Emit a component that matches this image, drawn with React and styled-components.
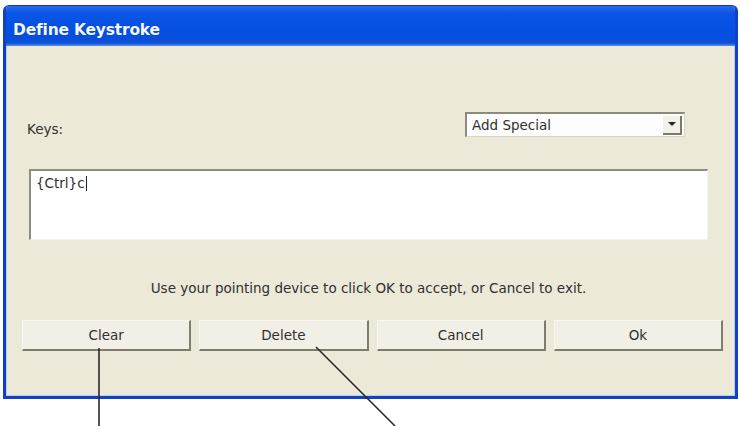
import React from 'react'
import styled, { createGlobalStyle } from 'styled-components'

const GlobalStyle = createGlobalStyle`
  html, body {
    margin: 0;
    background: #ffffff;
  }
  body {
    font-family: "DejaVu Sans", Verdana, sans-serif;
  }
`

const StyledPage = styled.div`
  position: relative;
  width: 740px;
  height: 426px;
  box-sizing: border-box;
  padding: 5px 2px 0 3px;
  overflow: hidden;
`

const StyledDialog = styled.div`
  width: 735px;
  height: 394px;
  box-sizing: border-box;
  display: flex;
  flex-direction: column;
  border: 3px solid #1141c4;
  border-top: none;
  border-radius: 6px 6px 0 0;
  background: #ece9d8;
  overflow: hidden;
`

const StyledTitleBar = styled.div`
  height: 41px;
  flex: none;
  display: flex;
  align-items: center;
  padding: 7px 0 0 7px;
  box-sizing: border-box;
  background: linear-gradient(180deg, #2c6bea 0%, #0b55e6 18%, #0450e4 60%, #0a4fd6 92%, #5d8ee6 100%);
  border-top: 1px solid #0a3bb0;
  color: #f4f7ff;
  font-size: 15.5px;
  font-weight: bold;
  letter-spacing: -0.2px;
  text-shadow: 0 0 1px rgba(0, 30, 120, .6);
`

const StyledBody = styled.div`
  flex: 1;
  display: flex;
  flex-direction: column;
  padding: 66px 12px 0 16px;
  box-shadow: inset 1px 0 0 #b9cdf3, inset -1px 0 0 #b9cdf3, inset 0 -1px 0 #b9cdf3;
  color: #303030;
  font-size: 13.5px;
`

const StyledKeysRow = styled.div`
  display: flex;
  justify-content: space-between;
  align-items: center;
  padding: 0 38px 0 5px;
`

const StyledLabel = styled.div`
  padding-top: 8px;
`

const StyledSelect = styled.div`
  width: 220px;
  height: 25px;
  box-sizing: border-box;
  display: flex;
  align-items: center;
  justify-content: space-between;
  padding: 0 2px 0 5px;
  background: #fdfdfb;
  border-top: 2px solid #8c8a7d;
  border-left: 2px solid #8c8a7d;
  border-right: 1px solid #d8d5c6;
  border-bottom: 1px solid #d8d5c6;
`

const StyledArrowButton = styled.div`
  width: 19px;
  height: 19px;
  box-sizing: border-box;
  display: flex;
  align-items: center;
  justify-content: center;
  background: #f2f0e8;
  border-right: 2px solid #7d7a6c;
  border-bottom: 2px solid #7d7a6c;
`

const StyledArrow = styled.span`
  width: 0;
  height: 0;
  border-left: 4px solid transparent;
  border-right: 4px solid transparent;
  border-top: 4px solid #222;
`

const StyledTextArea = styled.div`
  height: 71px;
  margin: 32px 15px 0 7px;
  box-sizing: border-box;
  padding: 4px 0 0 5px;
  background: #ffffff;
  border-top: 2px solid #8e8c80;
  border-left: 2px solid #8e8c80;
  border-right: 1px solid #f4f3ec;
  border-bottom: 1px solid #f4f3ec;
`

const StyledCaret = styled.span`
  display: inline-block;
  width: 1px;
  height: 15px;
  margin-left: 1px;
  vertical-align: -3px;
  background: #222;
`

const StyledMessage = styled.div`
  margin-top: 40px;
  text-align: center;
  padding-right: 8px;
`

const StyledButtonRow = styled.div`
  display: grid;
  grid-template-columns: repeat(4, 1fr);
  gap: 8px;
  margin-top: 24px;
`

const StyledButton = styled.div`
  height: 31px;
  box-sizing: border-box;
  display: flex;
  align-items: center;
  justify-content: center;
  padding-bottom: 1px;
  background: #f1efe6;
  border-top: 1px solid #f7f6f1;
  border-left: 1px solid #f7f6f1;
  border-right: 2px solid #7f7c6e;
  border-bottom: 2px solid #7f7c6e;
`

const StyledPointers = styled.svg`
  position: absolute;
  left: 0;
  top: 0;
  pointer-events: none;
`

const buttons = ['Clear', 'Delete', 'Cancel', 'Ok']

const App = () => (
  <StyledPage>
    <GlobalStyle />
    <StyledDialog>
      <StyledTitleBar>Define Keystroke</StyledTitleBar>

      <StyledBody>
        <StyledKeysRow>
          <StyledLabel>Keys:</StyledLabel>
          <StyledSelect>
            <span>Add Special</span>
            <StyledArrowButton>
              <StyledArrow />
            </StyledArrowButton>
          </StyledSelect>
        </StyledKeysRow>

        <StyledTextArea>
          {'{Ctrl}c'}<StyledCaret />
        </StyledTextArea>

        <StyledMessage>
          Use your pointing device to click OK to accept, or Cancel to exit.
        </StyledMessage>

        <StyledButtonRow>
          {buttons.map((label) => (
            <StyledButton key={label}>{label}</StyledButton>
          ))}
        </StyledButtonRow>
      </StyledBody>
    </StyledDialog>

    {/* callout lines pointing at Clear and Delete */}
    <StyledPointers width="740" height="426" viewBox="0 0 740 426">
      <line x1="99" y1="348" x2="99" y2="426" stroke="#2a2a2a" strokeWidth="1.6" />
      <line x1="316" y1="347" x2="395" y2="426" stroke="#2a2a2a" strokeWidth="1.6" />
    </StyledPointers>
  </StyledPage>
)

export default App
